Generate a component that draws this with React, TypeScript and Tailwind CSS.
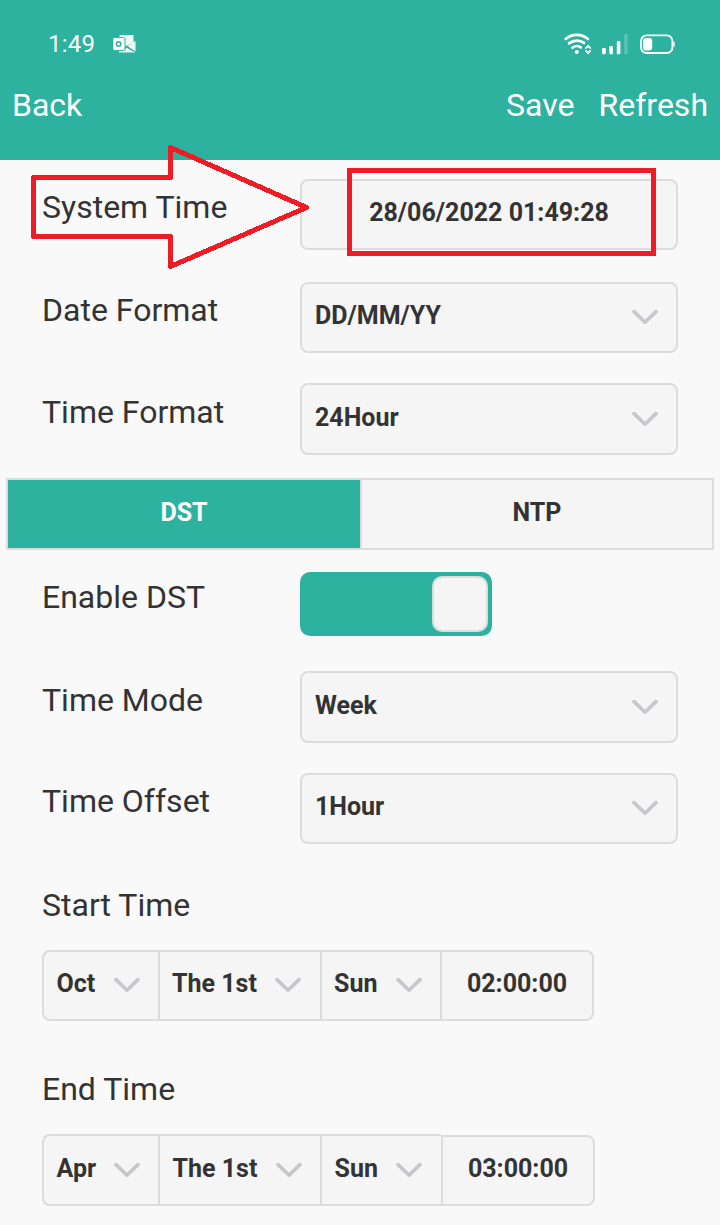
import type { ReactNode } from "react"
import { clsx } from "clsx"

// Chevron used by every dropdown
function Chevron({ className }: { className?: string }) {
  return (
    <svg className={clsx("h-4 w-[26px] shrink-0", className)} viewBox="0 0 26 16" fill="none" stroke="#c7c7cb" strokeWidth="3.6" strokeLinecap="round" strokeLinejoin="round">
      <path d="M2 2.6 13 13.2 24 2.6" />
    </svg>
  )
}

function StatusBar() {
  return (
    <div className="flex h-[60px] items-start justify-between pt-[30px] pr-[46px] pl-12 text-white">
      <div className="flex">
        <span className="w-[65px] text-2xl leading-7 tracking-[0.2px]">1:49</span>
        <svg className="mt-1 h-5 w-6" viewBox="0 0 24 20" fill="none">
          <path d="M6.5 1h14v7.5l-7 3.5-7-2z" fill="#fff" opacity=".92" />
          <path d="M22.5 7v10.5L14.5 12zM6 18.4h16.2l-8.4-4.6-2.8 2.4H6z" fill="#fff" opacity=".92" />
          <rect x="-.2" y="3.6" width="12.2" height="12.8" rx="1.4" fill="#fff" stroke="#2db2a0" strokeWidth="1" />
          <circle cx="5.6" cy="10" r="2.3" stroke="#2db2a0" strokeWidth="1.4" />
        </svg>
      </div>
      <svg className="mt-[3px] h-[22px] w-[113px] -mr-px" viewBox="0 0 113 22" fill="none" stroke="#fff" strokeLinecap="round">
        {/* wifi */}
        <path d="M3.6 6C10.2.5 19.4.5 26 6" strokeWidth="2.6" />
        <path d="M7 10.4C11.8 6.8 17.8 6.8 22 9.9" strokeWidth="2.6" />
        <path d="M10.4 14.8C13 12.7 16.4 12.7 18.8 14.4" strokeWidth="2.6" />
        <circle cx="14.8" cy="19" r="2" fill="#fff" stroke="none" />
        <path d="m24 15 2.1-2.2 2.1 2.2M24 17.9l2.1 2.2 2.1-2.2" strokeWidth="1.8" />
        {/* signal */}
        <g fill="#fff" stroke="none">
          <rect x="40" y="15" width="3.8" height="6.2" rx="1" />
          <rect x="47.3" y="13" width="3.6" height="8.2" rx="1" />
          <rect x="54.8" y="8" width="3.6" height="13.2" rx="1" />
          <rect x="62.2" y="1" width="3.4" height="20.2" rx="1" opacity=".22" />
        </g>
        {/* battery */}
        <rect x="79" y="2.4" width="31.4" height="17.6" rx="5.5" strokeWidth="1.8" />
        <path d="M111.4 8v6.4c1-.6 1.4-1.8 1.4-3.2S112.400 8.600 111.400 8Z" fill="#fff" stroke="none" />
        <rect x="81" y="5" width="9.200" height="12.400" rx="3" fill="#fff" stroke="none" />
      </svg>
    </div>
  )
}

function Field({ children, className }: { children: ReactNode; className?: string }) {
  return (
    <div className={clsx("flex w-[378px] items-start rounded-[8px] border-2 border-[#dcdcdc] bg-[#f5f5f5] px-[13px] text-[25px] leading-[30px] font-bold", className)}>
      {children}
    </div>
  )
}

function Row({ label, labelClass, className, children }: { label: string; labelClass?: string; className?: string; children: ReactNode }) {
  return (
    <div className={clsx("flex items-start pl-[42px]", className)}>
      <span className={clsx("w-[258px] shrink-0 text-[32px] leading-10", labelClass)}>{label}</span>
      {children}
    </div>
  )
}

function Select({ value, className }: { value: string; className?: string }) {
  return (
    <Field className={clsx("justify-between", className)}>
      <span>{value}</span>
      <Chevron className="mt-2 mr-[5px]" />
    </Field>
  )
}

function Cell({ value, className }: { value: string; className?: string }) {
  return (
    <div className={clsx("flex justify-between border-[#dcdcdc]", className)}>
      <span>{value}</span>
      <Chevron className="mt-2" />
    </div>
  )
}

export default function App() {
  return (
    <div className="relative h-[1225px] w-[720px] overflow-hidden bg-[#f9f9f9] font-[Roboto,sans-serif] text-[#333]">
      <header className="h-40 bg-[#2db2a0]">
        <StatusBar />
        <nav className="flex items-center px-3 pt-[25px] text-[32px] leading-10 text-white">
          <span className="grow">Back</span>
          <span className="mr-6">Save</span>
          <span>Refresh</span>
        </nav>
      </header>

      <Row label="System Time" className="mt-[19px]" labelClass="mt-2">
        <Field className="h-[71px] justify-center pt-[17px]">28/06/2022 01:49:28</Field>
      </Row>
      <Row label="Date Format" className="mt-8" labelClass="mt-2">
        <Select value="DD/MM/YY" className="h-[71px] pt-[17px]" />
      </Row>
      <Row label="Time Format" className="mt-[30px]" labelClass="mt-[9px]">
        <Select value="24Hour" className="h-[72px] pt-[18px]" />
      </Row>

      {/* tabs */}
      <div className="mx-1.5 mt-[23px] flex h-[72px] border-2 border-[#dcdcdc] bg-[#f5f5f5] text-center text-[25px] leading-[30px] font-bold">
        <div className="w-[352px] bg-[#2db2a0] pt-[18px] text-white">DST</div>
        <div className="grow border-l-2 border-[#dcdcdc] pt-[18px]">NTP</div>
      </div>

      <Row label="Enable DST" className="mt-[22px]" labelClass="mt-[5px]">
        <div className="flex h-16 w-48 justify-end rounded-[10px] bg-[#2db2a0] p-1">
          <div className="size-14 rounded-[10px] border-2 border-[#dcdcdc] bg-[#f5f5f5]" />
        </div>
      </Row>
      <Row label="Time Mode" className="mt-[35px]" labelClass="mt-[9px]">
        <Select value="Week" className="h-[72px] pt-[18px]" />
      </Row>
      <Row label="Time Offset" className="mt-[30px]" labelClass="mt-2">
        <Select value="1Hour" className="h-[71px] pt-[17px]" />
      </Row>

      <h2 className="mt-[41px] pl-[42px] text-[32px] leading-10">Start Time</h2>
      <div className="mt-[25px] ml-[42px] flex h-[71px] w-[552px] rounded-[8px] border-2 border-[#dcdcdc] bg-[#f5f5f5] text-[25px] leading-[30px] font-bold">
        <Cell value="Oct" className="w-[116px] border-r-2 pt-[17px] pr-[18px] pl-[12.5px]" />
        <Cell value="The 1st" className="w-[162px] border-r-2 pt-[17px] pr-[19px] pl-3" />
        <Cell value="Sun" className="w-[120px] border-r-2 pt-[17px] pr-[18px] pl-3" />
        <span className="grow pt-[17px] text-center">02:00:00</span>
      </div>

      <h2 className="mt-12 pl-[42px] text-[32px] leading-10">End Time</h2>
      <div className="mt-[25px] ml-[42px] flex h-[72px] items-end text-[25px] leading-[30px] font-bold">
        <div className="flex h-full rounded-l-[8px] border-2 border-r-0 border-[#dcdcdc] bg-[#f5f5f5]">
          <Cell value="Apr" className="w-[116px] border-r-2 pt-[18px] pr-[18px] pl-[12.5px]" />
          <Cell value="The 1st" className="w-[162px] border-r-2 pt-[18px] pr-[18px] pl-[12.5px]" />
          <Cell value="Sun" className="w-[119px] pt-[18px] pr-[19px] pl-[12.5px]" />
        </div>
        <div className="h-[71px] w-[154px] rounded-r-[8px] border-2 border-[#dcdcdc] bg-[#f5f5f5] pt-[17px] text-center">03:00:00</div>
      </div>

      {/* callouts drawn over the form */}
      <svg className="pointer-events-none absolute top-0 left-0 h-[280px] w-[720px]" viewBox="0 0 720 280" fill="none" stroke="#ee1c24" strokeWidth="5" shapeRendering="crispEdges">
        <path d="M33.5 177.5H170.5V147.500L306.500 207.500 170.5 266.5V236.5H33.5Z" strokeLinejoin="round" />
        <rect x="349.5" y="170.5" width="304" height="83" />
      </svg>
    </div>
  )
}
